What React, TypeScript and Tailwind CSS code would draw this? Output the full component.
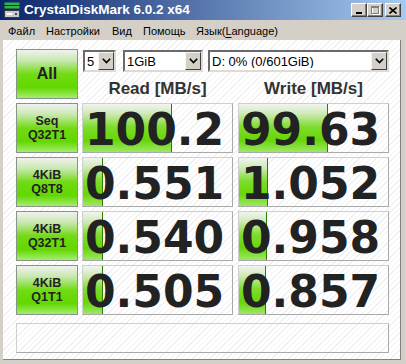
import React from 'react'

const rows = [
  { l1: 'Seq', l2: 'Q32T1', read: '100.2', rw: 89, write: '99.63', ww: 89 },
  { l1: '4KiB', l2: 'Q8T8', read: '0.551', rw: 20, write: '1.052', ww: 29 },
  { l1: '4KiB', l2: 'Q32T1', read: '0.540', rw: 20, write: '0.958', ww: 28 },
  { l1: '4KiB', l2: 'Q1T1', read: '0.505', rw: 20, write: '0.857', ww: 27 },
]

const menu = [
  { label: 'Файл', w: 'w-[38px]' },
  { label: 'Настройки', w: 'w-[66px]' },
  { label: 'Вид', w: 'w-[31px]' },
  { label: 'Помощь', w: 'w-[53px]' },
]

function AppIcon() {
  return (
    <svg width="16" height="16" viewBox="0 0 16 16">
      <rect x="0.5" y="0.5" width="15" height="2.5" fill="#2fb54a" />
      <rect x="0.5" y="4" width="15" height="2.5" fill="#2fb54a" />
      <rect x="0.5" y="8.5" width="15" height="7" fill="#c8c8c8" stroke="#3a3a3a" />
      <rect x="2.5" y="11" width="6" height="2" fill="#ffffff" />
      <rect x="11" y="11" width="2" height="2" fill="#4a4a4a" />
    </svg>
  )
}

function CaptionButton({ children }: { children: React.ReactNode }) {
  return (
    <div className="w-[16px] h-[14px] bg-[#d4d0c8] border border-t-white border-l-white border-r-[#404040] border-b-[#404040] shadow-[inset_-1px_-1px_0_#808080] flex items-center justify-center">
      {children}
    </div>
  )
}

function Combo({ text, w }: { text: string; w: string }) {
  return (
    <div className={`${w} h-[22px] bg-white border-2 border-t-[#6a6a6a] border-l-[#6a6a6a] border-b-[#dedbd4] border-r-[#dedbd4] flex items-center`}>
      <span className="flex-1 pl-[2px] text-[13px] text-black leading-none truncate">{text}</span>
      <div className="w-[16px] h-full bg-[#d4d0c8] border border-t-[#f4f4f4] border-l-[#f4f4f4] border-r-[#404040] border-b-[#404040] flex items-center justify-center">
        <svg width="9" height="6" viewBox="0 0 9 6">
          <polyline points="0.8,0.8 4.5,4.5 8.2,0.8" fill="none" stroke="#000" strokeWidth="1.6" />
        </svg>
      </div>
    </div>
  )
}

function ValueBox({ value, bar }: { value: string; bar: number }) {
  return (
    <div className="relative w-[151px] h-[50px] border border-t-[#cfcfcf] border-l-[#cfcfcf] border-r-[#a9a9a9] border-b-[#a9a9a9] pt-[4px] pl-[2px]">
      <div
        className="absolute left-0 top-0 bottom-0 border-r border-[#2f7a08] bg-[linear-gradient(to_bottom,#f2f4f0_0%,#cfeab8_20%,#7edc2c_48%,#66d606_75%,#9ee866_100%)]"
        style={{ width: bar }}
      />
      <div className="relative font-['DejaVu_Sans',sans-serif] font-bold text-[44px] leading-none text-[#222222]">
        {value}
      </div>
    </div>
  )
}

function GreenButton({ children }: { children: React.ReactNode }) {
  return (
    <div className="w-[62px] h-[50px] border border-[#879487] bg-[linear-gradient(to_bottom,#f0f2ee_0%,#c8e8b0_22%,#72da14_50%,#62d800_78%,#a4ee70_100%)] flex flex-col items-center justify-center text-[#222222] font-bold">
      {children}
    </div>
  )
}

export default function App() {
  return (
    <div className="w-[406px] h-[364px] bg-[#d4d0c8] flex flex-col overflow-hidden font-['Liberation_Sans',sans-serif]">
      {/* title bar */}
      <div className="h-[20px] shrink-0 flex items-center bg-[linear-gradient(to_right,#0a246a,#a6caf0)]">
        <div className="ml-[4px]">
          <AppIcon />
        </div>
        <span className="ml-[4px] text-white text-[13.5px] font-bold leading-none">CrystalDiskMark 6.0.2 x64</span>
        <div className="ml-auto mr-[5px] flex items-center">
          <CaptionButton>
            <div className="w-[6px] h-[2px] bg-black mt-[6px] -ml-[1px]" />
          </CaptionButton>
          <CaptionButton>
            <svg width="9" height="9" viewBox="0 0 9 9">
              <rect x="1.5" y="1.5" width="7" height="7" fill="none" stroke="#ffffff" />
              <rect x="0.5" y="0.5" width="7" height="7" fill="none" stroke="#808080" />
              <line x1="0.5" y1="1.5" x2="7.5" y2="1.5" stroke="#808080" />
            </svg>
          </CaptionButton>
          <div className="ml-[2px]">
            <CaptionButton>
              <svg width="8" height="7" viewBox="0 0 8 7">
                <path d="M0.5 0.5 L7.5 6.5 M7.5 0.5 L0.5 6.5" stroke="#000" strokeWidth="1.6" />
              </svg>
            </CaptionButton>
          </div>
        </div>
      </div>

      {/* menu bar */}
      <div className="h-[20px] shrink-0 flex items-center pl-[8px] pt-[2px] text-[11px] text-black leading-none">
        {menu.map((m) => (
          <span key={m.label} className={m.w}>
            {m.label}
          </span>
        ))}
        <span>
          Язык(<span className="underline underline-offset-[2px]">L</span>anguage)
        </span>
      </div>

      {/* client area */}
      <div className="flex-1 ml-[3px] mr-[5px] mb-[4px] border-r border-b border-[#808080] pl-[13px] pt-[9px] bg-[repeating-linear-gradient(135deg,#ffffff_0px,#ffffff_3px,#f0f0f0_3px,#f0f0f0_4px)]">
        <div className="flex">
          <GreenButton>
            <span className="text-[16px] leading-none">All</span>
          </GreenButton>
          <div className="ml-[4px] flex flex-col">
            <div className="flex items-center mt-[1px] ml-[1px]">
              <Combo text="5" w="w-[33px]" />
              <div className="ml-[7px]">
                <Combo text="1GiB" w="w-[80px]" />
              </div>
              <div className="ml-[5px]">
                <Combo text="D: 0% (0/601GiB)" w="w-[181px]" />
              </div>
            </div>
            <div className="flex mt-[7px] text-[17px] font-bold leading-[20px] text-[#333333]">
              <div className="w-[151px] text-center">Read [MB/s]</div>
              <div className="w-[151px] ml-[5px] text-center">Write [MB/s]</div>
            </div>
          </div>
        </div>

        <div className="mt-[4px] flex flex-col gap-[4px]">
          {rows.map((r, i) => (
            <div key={i} className="flex">
              <GreenButton>
                <span className="text-[12.5px] leading-[14px]">{r.l1}</span>
                <span className="text-[12.5px] leading-[14px]">{r.l2}</span>
              </GreenButton>
              <div className="ml-[4px]">
                <ValueBox value={r.read} bar={r.rw} />
              </div>
              <div className="ml-[5px]">
                <ValueBox value={r.write} bar={r.ww} />
              </div>
            </div>
          ))}
        </div>

        <div className="mt-[8px] w-[373px] h-[30px] border border-t-[#cfcfcf] border-l-[#cfcfcf] border-r-[#a9a9a9] border-b-[#a9a9a9]" />
      </div>
    </div>
  )
}
